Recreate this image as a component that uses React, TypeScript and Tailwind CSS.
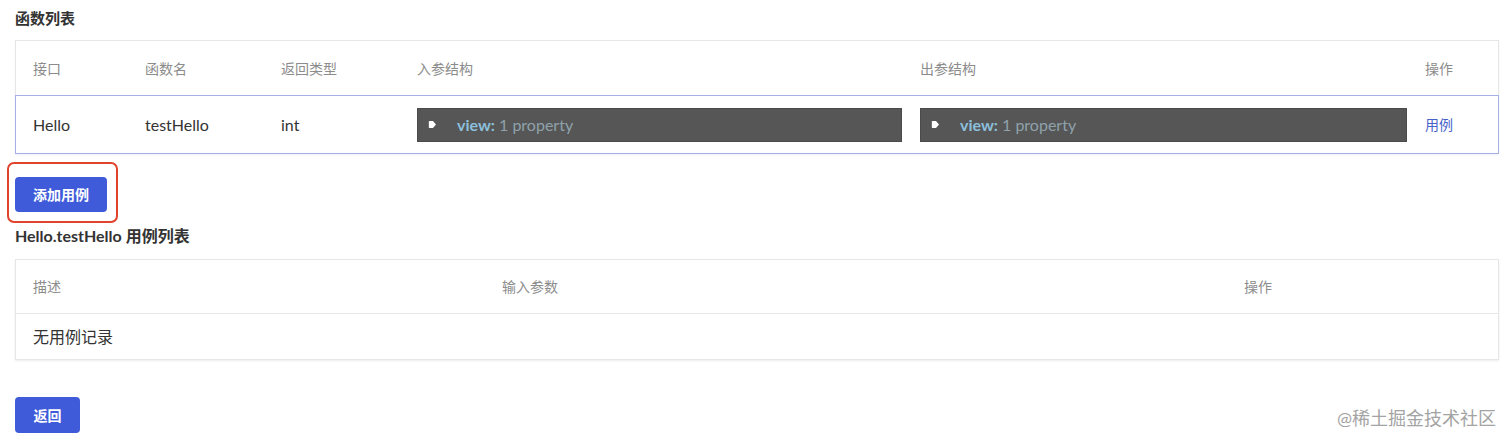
import React from "react";

const font = { fontFamily: 'Lato, "Noto Sans CJK SC", sans-serif' };

function Arrow() {
  return (
    <svg width="9" height="9" viewBox="0 0 9 9" className="shrink-0">
      <path d="M1.5 1 H5 L8 4.5 L5 8 H1.5 Q0.8 8 0.8 7.2 V1.8 Q0.8 1 1.5 1 Z" fill="#ffffff" />
    </svg>
  );
}

function JsonBox() {
  return (
    <div className="h-[34px] bg-[#565656] border border-[#4b4b4b] flex items-center pl-[10px] gap-[20px]">
      <Arrow />
      <div className="text-[16px] leading-none">
        <span className="font-bold text-[#8cc0dc]">view:</span>
        <span className="text-[#8fa2ab]"> 1 property</span>
      </div>
    </div>
  );
}

export default function App() {
  return (
    <div style={font} className="relative w-[1512px] h-[444px] bg-white pl-[15px] pr-[13px] pt-[8px] text-[#333]">
      <div className="text-[15px] leading-[20px] font-bold text-[#333]">函数列表</div>

      <div className="mt-[12px] shadow-[0_1px_2px_rgba(0,0,0,0.06)]">
        <div className="h-[55px] border-t border-x border-[#e6e6e6] grid grid-cols-[111px_136px_136px_503px_505px_1fr] items-center text-[14px] text-[#8c8c8c]">
          <div className="pl-[17px]">接口</div>
          <div className="pl-[18px]">函数名</div>
          <div className="pl-[18px]">返回类型</div>
          <div className="pl-[18px]">入参结构</div>
          <div className="pl-[18px]">出参结构</div>
          <div className="pl-[18px]">操作</div>
        </div>
        <div className="h-[59px] border border-[#a6b0e6] grid grid-cols-[111px_136px_136px_503px_505px_1fr] items-center text-[16px] text-[#333]">
          <div className="pl-[17px]">Hello</div>
          <div className="pl-[18px]">testHello</div>
          <div className="pl-[18px]">int</div>
          <div className="pl-[18px]">
            <JsonBox />
          </div>
          <div className="pl-[18px]">
            <JsonBox />
          </div>
          <div className="pl-[18px] text-[14px] text-[#4762c9]">用例</div>
        </div>
      </div>

      <div className="mt-[23px] relative w-[92px]">
        <button className="h-[35px] w-[92px] rounded-[4px] bg-[#3f5bd9] text-white text-[14px] font-bold flex items-center justify-center">
          添加用例
        </button>
        <div className="absolute left-[-8px] top-[-15px] w-[111px] h-[61px] border-[2.5px] border-[#e0432b] rounded-[7px] pointer-events-none" />
      </div>

      <div className="mt-[14px] text-[16px] leading-[20px] font-bold text-[#333]">Hello.testHello 用例列表</div>

      <div className="mt-[13px] border border-[#e6e6e6] shadow-[0_1px_2px_rgba(0,0,0,0.08)]">
        <div className="h-[54px] border-b border-[#e6e6e6] grid grid-cols-[468px_742px_1fr] items-center text-[14px] text-[#8c8c8c]">
          <div className="pl-[17px]">描述</div>
          <div className="pl-[18px]">输入参数</div>
          <div className="pl-[18px]">操作</div>
        </div>
        <div className="h-[45px] flex items-center pl-[17px] text-[16px] text-[#333]">无用例记录</div>
      </div>

      <button className="mt-[37px] h-[36px] w-[65px] rounded-[4px] bg-[#3f5bd9] text-white text-[14px] font-bold flex items-center justify-center">
        返回
      </button>

      <div className="absolute right-[16px] top-[408px] text-[18px] leading-[20px] text-[#a3a3a3]">@稀土掘金技术社区</div>
    </div>
  );
}
